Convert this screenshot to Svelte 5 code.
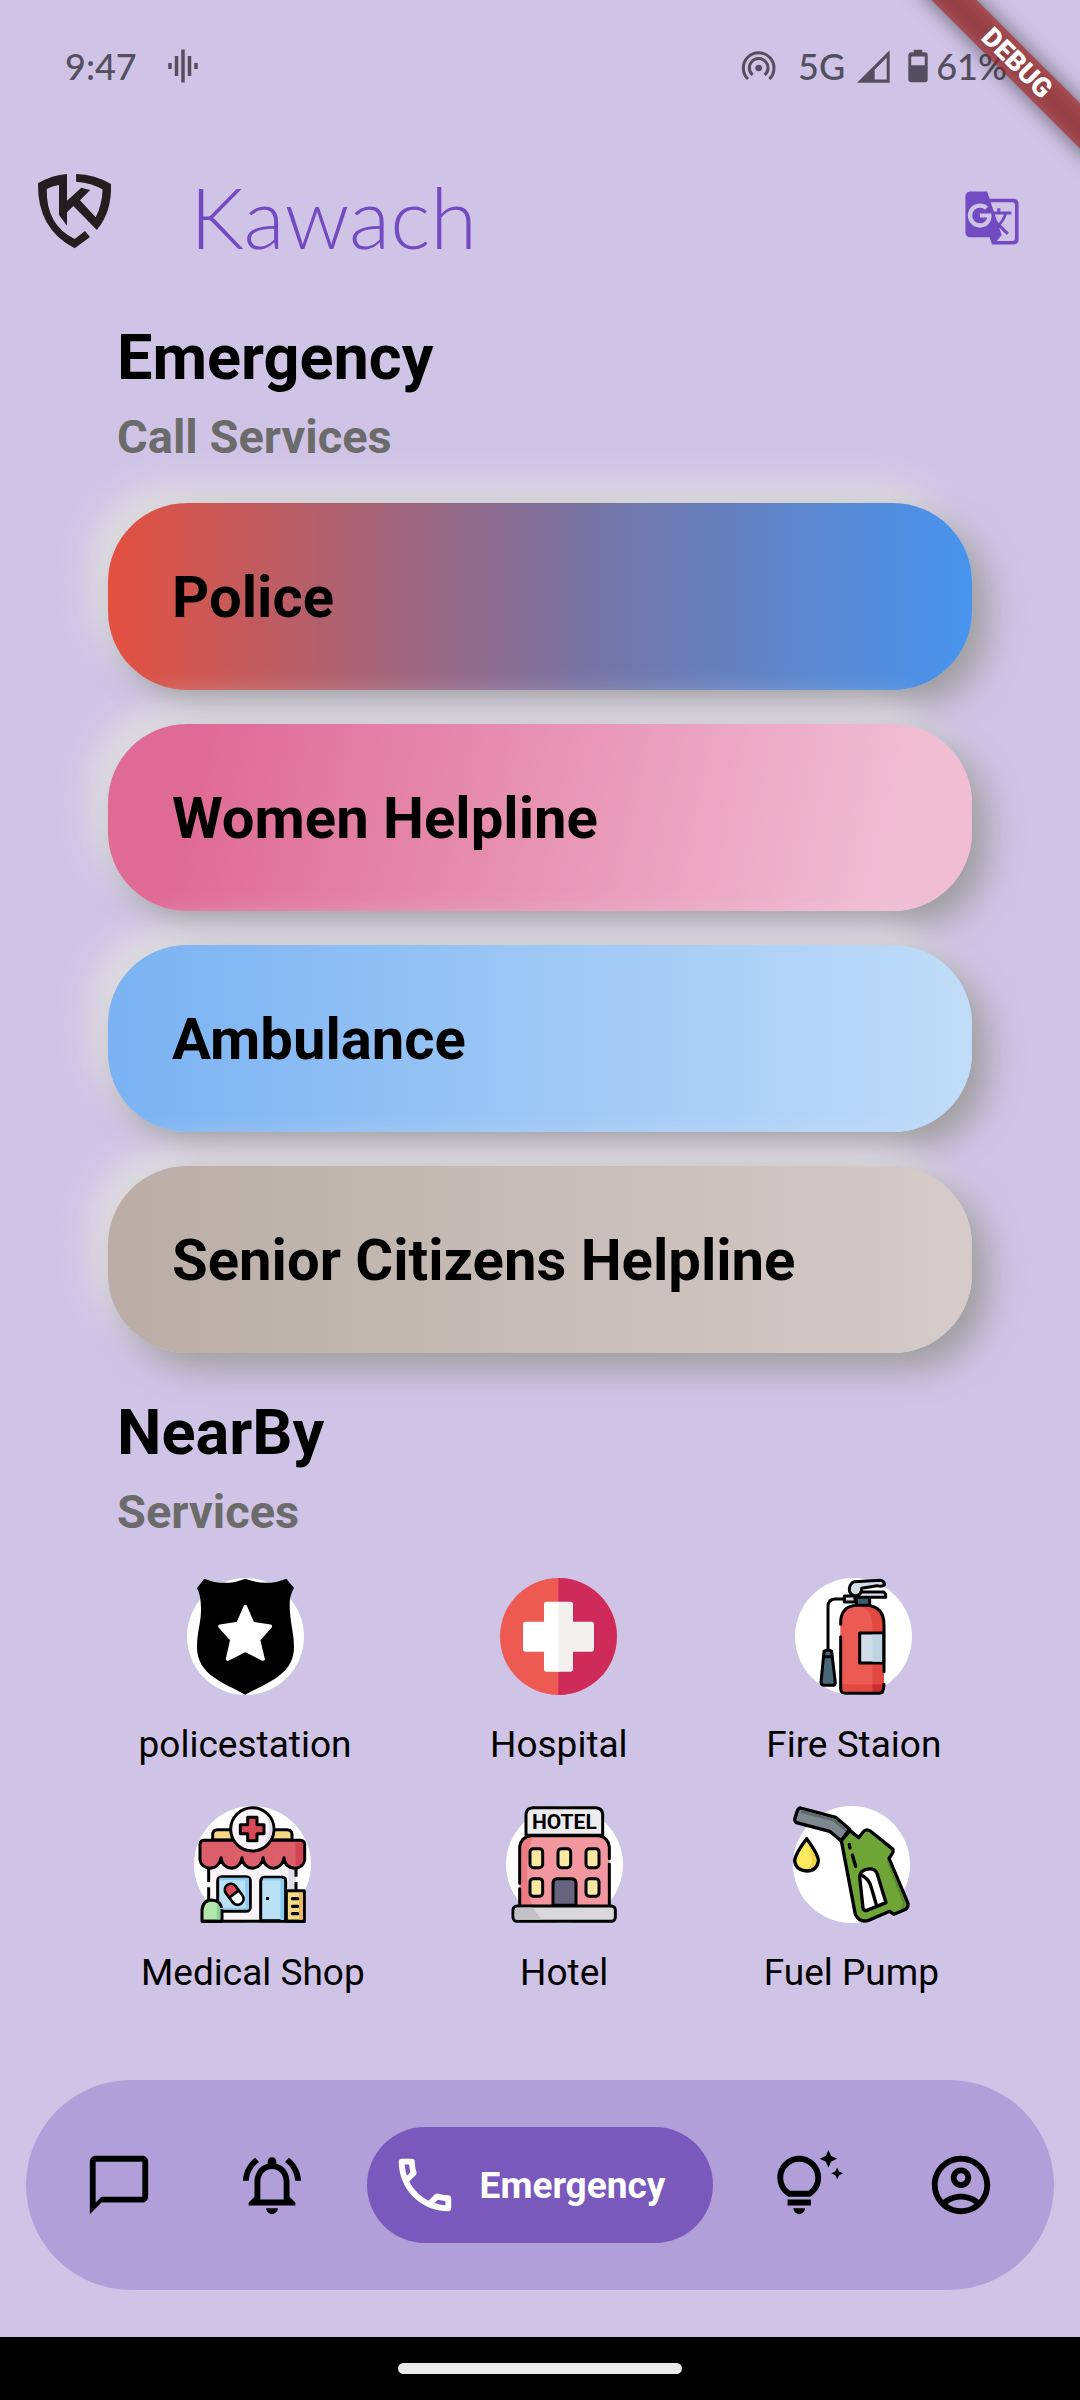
<script>
  const services = [
    { name: 'Police', tone: 'police' },
    { name: 'Women Helpline', tone: 'women' },
    { name: 'Ambulance', tone: 'ambulance' },
    { name: 'Senior Citizens Helpline', tone: 'senior' }
  ];
</script>

{#snippet policeIcon()}
  <svg class="place-icon" viewBox="78 55 351 351" aria-hidden="true">
    <circle cx="253.500" cy="230.500" r="175.500" fill="#fff" />
    <path d="M130 57Q190 82 253 57Q316 82 376 57L399 85C392 98 386 112 386 130C386 190 399 215 399 262C399 345 320 368 253 405C186 368 108 345 108 262C108 215 120 190 120 150C120 115 115 100 108 85Z" fill="#000" />
    <path d="M253 141L275 192L328 200L292 240L306 298L253 271L200 298L213 240L177 200L231 192Z" fill="#fff" stroke="#fff" stroke-width="11" stroke-linejoin="round" />
  </svg>
{/snippet}

{#snippet hospitalIcon()}
  <svg class="place-icon" viewBox="63 55 351 351" aria-hidden="true">
    <circle cx="238.500" cy="230.500" r="175.500" fill="#ed5a52" />
    <path d="M238 55a175.500 175.500 0 0 1 0 351z" fill="#cf2b5a" />
    <path d="M242 126H203q-8 0-8 8V186H140q-8 0-8 8V268q0 8 8 8H195V328q0 8 8 8H242z" fill="#fff" />
    <path d="M238 126H274q8 0 8 8V186H337q8 0 8 8V268q0 8-8 8H282V328q0 8-8 8H238z" fill="#f3f1f0" />
  </svg>
{/snippet}

{#snippet fireIcon()}
  <svg class="place-icon" viewBox="950 55 351 351" aria-hidden="true">
    <circle cx="1125.500" cy="230.500" r="175.500" fill="#fff" />
    <path d="M1086 400V195Q1092 140 1138 137H1166Q1216 142 1217 195V400Z" fill="#eb5a53" />
    <path d="M1150 140Q1182 155 1182 195V400H1216V195Q1212 142 1150 140Z" fill="#e1483f" />
    <path d="M1088 374H1182V402H1088Z" fill="#e1483f" />
    <path d="M1182 374H1216V402H1182Z" fill="#c92f31" />
    <path d="M1134 114H1176V134H1134Z" fill="#3c5b70" />
    <g fill="#d0dce8" stroke="#000" stroke-width="9" stroke-linejoin="round" stroke-linecap="round">
      <path d="M1144 220H1216V310H1144Z" />
      <path d="M1098 109H1130V127H1098Z" />
      <path d="M1134 97H1217L1222 104V113H1134Z" fill="#d9e3ec" />
      <path d="M1128 66L1205 62Q1219 64 1218 76Q1212 82 1196 78L1150 86Q1150 108 1131 108Q1112 106 1113 86Q1116 70 1128 66Z" />
    </g>
    <path d="M1182 225H1212V306H1182Z" fill="#bfd3e2" />
    <g fill="none" stroke="#000" stroke-width="9" stroke-linejoin="round" stroke-linecap="round">
      <path d="M1087 194Q1085 138 1138 137H1166Q1217 142 1217 195V336M1087 231V388Q1088 401 1102 401H1204Q1216 400 1217 374M1134 114V134M1174 114V134" />
      <path d="M1098 118H1070Q1049 120 1049 140V270" />
      <path d="M1037 275Q1049 267 1060 275L1071 370Q1070 377 1062 377H1036Q1028 376 1028 368Z" fill="#4b6678" />
      <path d="M1037 291H1061" />
    </g>
  </svg>
{/snippet}

{#snippet medicalIcon()}
  <svg class="place-icon" viewBox="225 78 351 351" aria-hidden="true">
    <circle cx="400.500" cy="253.500" r="175.500" fill="#fff" />
    <path d="M272 250H530V422H272Z" fill="#f8f4f8" />
    <path d="M508 250H530V330H508Z" fill="#dfdcec" />
    <g stroke="#000" stroke-width="9" stroke-linejoin="round">
      <path d="M281 180V163Q282 149 296 149H504Q518 149 519 163V180Z" fill="#f8d983" />
      <path d="M243 192Q244 181 256 181H544Q556 182 557 192V240Q552 264 526 265Q497 262 495 233Q491 262 463 265Q435 262 432 233Q428 262 400 265Q372 262 369 233Q365 262 338 265Q309 262 306 233Q302 262 274 265Q247 262 243 240Z" fill="#dc5e6a" />
      <rect x="296" y="290" width="98" height="104" rx="12" fill="#b9e2f7" />
      <path d="M425 422V303Q426 293 436 292H490Q500 293 500 303V422Z" fill="#b9e2f7" />
      <path d="M502 332H556V424H502Z" fill="#f8d983" />
      <path d="M249 424V390Q252 360 279 360Q306 362 309 390V424Z" fill="#b4e7ab" />
      <circle cx="400" cy="148" r="65" fill="#f8f4f8" />
      <path d="M386 112H414V134H435V161H414V182H386V161H364V134H386Z" fill="#d84a57" />
      <path d="M246 424H559M269 266V306M269 322V360M531 266V290M531 306V330" fill="none" />
    </g>
    <path d="M529 187H543Q552 189 552 198V240Q546 257 530 260Z" fill="#d34453" />
    <path d="M440 104Q464 148 434 190Q462 175 460 146Q460 120 440 104Z" fill="#dfdcec" />
    <path d="M491 298H495V420H484V298ZM378 295H390V388H300V383H380Z" fill="#8ec9f4" />
    <path d="M540 338H551V419H540Z" fill="#eeb863" />
    <path d="M301 297H388M432 298H488" stroke="#8ec9f4" stroke-width="7" />
    <g transform="rotate(-37 345 342)">
      <rect x="327" y="308" width="36" height="70" rx="18" fill="#fff" />
      <path d="M327 342V326a18 18 0 0 1 36 0V342Z" fill="#dc4958" />
      <path d="M327 342H363" stroke="#000" stroke-width="8" />
      <rect x="327" y="308" width="36" height="70" rx="18" fill="none" stroke="#000" stroke-width="8" />
    </g>
    <path d="M520 356H536M520 379H536M520 401H536" stroke="#000" stroke-width="10" stroke-linecap="round" />
    <rect x="441" y="351" width="9" height="9" />
    <path d="M294 368Q303 375 303 392V418H293Z" fill="#83cf95" />
  </svg>
{/snippet}

{#snippet hotelIcon()}
  <svg class="place-icon" viewBox="80 78 351 351" aria-hidden="true">
    <circle cx="255.500" cy="253.500" r="175.500" fill="#fff" />
    <path d="M121 378V200Q126 170 154 167H360Q386 172 390 200V378Z" fill="#f2979f" />
    <path d="M121 378V200Q126 172 160 170Q140 220 144 300Q146 350 160 378Z" fill="#ec7c82" />
    <g stroke="#000" stroke-width="9" stroke-linejoin="round" stroke-linecap="round">
      <path d="M140 166V102Q142 84 160 83H350Q368 84 370 102V166Z" fill="#ececee" />
      <path d="M121 310V200Q126 170 154 167H360Q386 172 390 200V236M390 252V376M121 326V376" fill="none" />
      <path d="M221 376V308Q222 297 233 296H278Q289 297 290 308V376Z" fill="#68647f" />
      <g fill="#fbe8a2">
        <rect x="152" y="206" width="38" height="57" rx="10" />
        <rect x="236" y="206" width="38" height="57" rx="10" />
        <rect x="320" y="206" width="39" height="57" rx="10" />
        <rect x="152" y="296" width="38" height="53" rx="10" />
        <rect x="320" y="296" width="39" height="53" rx="10" />
      </g>
      <rect x="101" y="378" width="307" height="46" rx="12" fill="#d9d9dc" />
    </g>
    <path d="M114 383H160L187 419H114Q106 418 106 411V391Q107 384 114 383Z" fill="#c3c2c9" />
    <text class="sign" x="255" y="148" text-anchor="middle">HOTEL</text>
  </svg>
{/snippet}

{#snippet fuelIcon()}
  <svg class="place-icon" viewBox="940 78 351 351" aria-hidden="true">
    <circle cx="1115.500" cy="253.500" r="175.500" fill="#fff" />
    <g stroke="#000" stroke-width="10" stroke-linejoin="round" stroke-linecap="round">
      <path d="M963 84L1068 112L1110 148L1084 182L1050 154L950 128Q945 124 945 118L953 92Q957 84 963 84Z" fill="#7f878e" />
      <path d="M1085 182L1111 152L1137 173L1153 153Q1162 146 1172 153L1240 208Q1242 216 1237 222L1228 235L1285 370Q1286 382 1278 388L1243 403L1230 394L1164 422Q1138 427 1127 403Z" fill="#6fa436" />
      <path d="M1140 290Q1142 272 1160 268Q1184 262 1192 280L1219 368L1160 392Q1152 392 1150 384Z" fill="#fff" />
      <path d="M1142 284Q1168 294 1176 326L1190 374M1109 193L1111 204M1118 225L1128 259" fill="none" />
      <path d="M981 176Q1016 224 1016 242Q1012 272 981 273Q948 271 945 242Q946 222 981 176Z" fill="#fce95d" />
    </g>
    <path d="M967 90L1066 117L1102 148L1096 154L1060 124L962 98Z" fill="#5f676d" />
    <path d="M1224 238L1234 262L1278 368Q1278 380 1264 388L1270 370L1222 246Z" fill="#588a2c" />
    <path d="M981 186Q1002 225 996 250Q992 262 980 267Q1008 264 1011 242Q1010 226 981 186Z" fill="#f1d04c" />
  </svg>
{/snippet}

{#snippet place(name, icon)}
  <button type="button" class="place">
    {@render icon()}
    <span>{name}</span>
  </button>
{/snippet}

<div class="screen">
  <div class="status">
    <time>9:47</time>
    <svg class="wave" viewBox="0 0 30 34" aria-hidden="true">
      <path d="M2 14v6M8.500 7v20M15 .500v33M21.500 7v20M28 14v6" stroke="currentColor" stroke-width="3.500" />
    </svg>
    <svg class="hotspot" viewBox="125 153 102 90" aria-hidden="true">
      <g fill="none" stroke="currentColor" stroke-width="9">
        <path d="M143 237A46 46 0 1 1 207 237" />
        <path d="M157 225A28 28 0 1 1 193 225" />
      </g>
      <circle cx="175" cy="204" r="10" fill="currentColor" />
    </svg>
    <span class="network">5G</span>
    <svg class="signal" viewBox="469 148 99 98" aria-hidden="true">
      <path d="M469 246L567 148V246ZM522 236H558V171L522 207Z" fill="currentColor" fill-rule="evenodd" />
    </svg>
    <svg class="battery" viewBox="623 143 62 103" aria-hidden="true">
      <path d="M641 144H667V152H677Q684 153 684 160V238Q683 245 676 245H632Q625 244 624 238V160Q625 153 632 152H641ZM633 165V192H675V165Z" fill="currentColor" fill-rule="evenodd" />
    </svg>
    <span>61%</span>
  </div>

  <div class="ribbon-corner"><div class="ribbon"><span>DEBUG</span></div></div>

  <header>
    <svg class="logo" viewBox="37 170 75 96" role="img" aria-label="Kawach logo">
      <path d="M38 183.300Q52 175 67 174V200.700L81.300 187.700L90.200 190L80 200.300L95.700 217.300Q102 205 102.600 189.500Q92 183 76.100 181.700V174Q95 174.500 111 184Q112 212 96.800 230L73.300 206L67 212.300V225.700L59 215V185Q52 186 46.800 189Q46 225 74.700 239L85 231L90 237L74.700 248.300Q37 229 38 183.300Z" fill="#231f20" />
    </svg>
    <h1>Kawach</h1>
    <button type="button" class="translate" aria-label="Translate">
      <svg viewBox="0 0 24 24" aria-hidden="true">
        <path fill="currentColor" d="M21 4H11l-1-3H3c-1.100 0-2 .9-2 2v15c0 1.100.9 2 2 2h8l1 3h9c1.100 0 2-.9 2-2V6c0-1.100-.9-2-2-2zM7 16c-2.760 0-5-2.240-5-5s2.240-5 5-5c1.350 0 2.480.5 3.350 1.300L9.030 8.570c-.38-.36-1.040-.78-2.030-.78-1.740 0-3.150 1.440-3.150 3.210S5.260 14.210 7 14.210c2.010 0 2.840-1.440 2.920-2.410H7v-1.710h4.680c.07.31.12.61.12 1.020C11.800 13.970 9.890 16 7 16zm6.170-5.420h3.700c-.43 1.250-1.110 2.430-2.050 3.470-.31-.35-.6-.72-.86-1.100l-.79-2.370zm8.330 9.920c0 .55-.45 1-1 1H14l2-2.500-1.040-3.100 3.100 3.100.92-.92-3.300-3.250.02-.02c1.130-1.250 1.930-2.690 2.400-4.220H20v-1.300h-4.530V8h-1.290v1.290h-1.440L11.460 5.500h9.040c.55 0 1 .45 1 1v14z" />
      </svg>
    </button>
  </header>

  <main>
    <section class="emergency">
      <h2>Emergency</h2>
      <p>Call Services</p>
      <div class="cards">
        {#each services as service}
          <button type="button" class="card {service.tone}">{service.name}</button>
        {/each}
      </div>
    </section>

    <section class="nearby">
      <h2>NearBy</h2>
      <p>Services</p>
      <div class="places">
        <div class="row">
          {@render place('policestation', policeIcon)}
          {@render place('Hospital', hospitalIcon)}
          {@render place('Fire Staion', fireIcon)}
        </div>
        <div class="row">
          {@render place('Medical Shop', medicalIcon)}
          {@render place('Hotel', hotelIcon)}
          {@render place('Fuel Pump', fuelIcon)}
        </div>
      </div>
    </section>
  </main>

  <nav aria-label="Main">
    <button type="button" aria-label="Chat">
      <svg viewBox="0 0 24 24" aria-hidden="true"><path fill="currentColor" d="M20 2H4c-1.100 0-2 .9-2 2v18l4-4h14c1.100 0 2-.9 2-2V4c0-1.100-.9-2-2-2zm0 14H6l-2 2V4h16v12z" /></svg>
    </button>
    <button type="button" aria-label="Alerts">
      <svg viewBox="0 0 24 24" aria-hidden="true"><path fill="currentColor" d="M12 22c1.100 0 2-.9 2-2h-4c0 1.100.9 2 2 2zm6-6v-5c0-3.070-1.630-5.640-4.500-6.320V4c0-.83-.67-1.500-1.500-1.500s-1.500.67-1.500 1.500v.68C7.640 5.360 6 7.920 6 11v5l-2 2v1h16v-1l-2-2zm-2 1H8v-6c0-2.480 1.510-4.500 4-4.500s4 2.020 4 4.500v6zM7.580 4.080L6.150 2.650C3.750 4.480 2.170 7.300 2.030 10.500h2c.15-2.650 1.510-4.970 3.550-6.420zM19.970 10.500h2c-.15-3.200-1.730-6.020-4.120-7.850l-1.420 1.430c2.020 1.450 3.390 3.770 3.540 6.420z" /></svg>
    </button>
    <button type="button" class="active" aria-current="page">
      <svg viewBox="0 0 24 24" aria-hidden="true"><path fill="currentColor" d="M6.540 5c.06.89.21 1.760.45 2.590l-1.200 1.200c-.41-1.200-.67-2.470-.76-3.790h1.510m9.860 12.020c.85.24 1.720.39 2.600.45v1.490c-1.320-.09-2.590-.35-3.800-.75l1.200-1.190M7.500 3H4c-.55 0-1 .45-1 1 0 9.390 7.610 17 17 17 .55 0 1-.45 1-1v-3.490c0-.55-.45-1-1-1-1.240 0-2.450-.2-3.570-.57-.1-.04-.21-.05-.31-.05-.26 0-.51.1-.71.29l-2.200 2.200c-2.830-1.450-5.150-3.760-6.590-6.590l2.200-2.200c.28-.28.36-.67.25-1.020C8.700 6.450 8.500 5.250 8.500 4c0-.55-.45-1-1-1z" /></svg>
      <span>Emergency</span>
    </button>
    <button type="button" aria-label="Tips">
      <svg viewBox="0 0 24 24" aria-hidden="true"><path fill="currentColor" d="M7 20h4c0 1.100-.9 2-2 2s-2-.9-2-2zM5 19h8v-2H5v2zM16.500 9.500c0 3.820-2.660 5.860-3.770 6.500H5.270C4.160 15.360 1.500 13.320 1.500 9.500 1.500 5.360 4.860 2 9 2s7.500 3.360 7.500 7.500zM14.500 9.500C14.500 6.470 12.030 4 9 4S3.500 6.470 3.500 9.500c0 2.470 1.490 3.890 2.350 4.500h6.300c.86-.61 2.350-2.030 2.350-4.500zM21.370 7.370L20 8l1.370.63L22 10l.63-1.370L24 8l-1.370-.63L22 6l-.63 1.370zM19 6l.94-2.060L22 3l-2.060-.94L19 0l-.94 2.060L16 3l2.060.94L19 6z" /></svg>
    </button>
    <button type="button" aria-label="Profile">
      <svg viewBox="0 0 24 24" aria-hidden="true"><path fill="currentColor" d="M12 2C6.480 2 2 6.480 2 12s4.480 10 10 10 10-4.480 10-10S17.520 2 12 2zM7.350 18.500C8.660 17.560 10.260 17 12 17s3.340.56 4.650 1.500C15.340 19.440 13.740 20 12 20s-3.340-.56-4.650-1.500zm10.790-1.380C16.450 15.800 14.320 15 12 15s-4.450.8-6.140 2.120C4.700 15.730 4 13.950 4 12c0-4.420 3.580-8 8-8s8 3.580 8 8c0 1.950-.7 3.730-1.860 5.120zM12 6c-1.930 0-3.500 1.570-3.500 3.500S10.070 13 12 13s3.500-1.570 3.500-3.500S13.930 6 12 6zm0 5c-.83 0-1.500-.67-1.500-1.500S11.170 8 12 8s1.500.67 1.500 1.500S12.830 11 12 11z" /></svg>
    </button>
  </nav>

  <div class="system"><div class="handle"></div></div>
</div>

<style>
  :global(body) {
    margin: 0;
    background: #cfc4e6;
  }

  .screen {
    position: relative;
    display: flex;
    flex-direction: column;
    min-height: 100vh;
    font-family: Roboto, sans-serif;
    color: #000;
  }

  button {
    margin: 0;
    padding: 0;
    border: 0;
    background: none;
    color: inherit;
    font: inherit;
    cursor: pointer;
  }

  svg {
    display: block;
    flex: none;
    overflow: visible;
  }

  h1, h2, p {
    margin: 0;
  }

  .status {
    display: flex;
    align-items: center;
    height: 132px;
    padding: 0 73px 0 65px;
    font-family: Lato, sans-serif;
    font-size: 36px;
    font-weight: 500;
    line-height: 44px;
    color: #544f5e;
  }

  .wave {
    width: 30px;
    height: 34px;
    margin-left: 31px;
  }

  .hotspot {
    width: 34px;
    height: 30px;
    margin-left: auto;
  }

  .network {
    margin-left: 22px;
  }

  .signal {
    width: 33px;
    height: 33px;
    margin-left: 12px;
  }

  .battery {
    width: 20px;
    height: 34px;
    margin: 0 8px 0 18px;
  }

  .ribbon-corner {
    position: absolute;
    top: 0;
    right: 0;
    width: 180px;
    height: 180px;
    overflow: hidden;
    pointer-events: none;
  }

  .ribbon {
    position: absolute;
    top: 47px;
    right: -62px;
    width: 250px;
    height: 32px;
    transform: rotate(45deg);
    text-align: center;
    font-size: 27px;
    font-weight: 900;
    line-height: 32px;
    color: #fff;
  }

  .ribbon::before,
  .ribbon::after {
    content: '';
    position: absolute;
    inset: 0;
  }

  .ribbon::before {
    background: rgba(0, 0, 0, 0.5);
    filter: blur(11px);
  }

  .ribbon::after {
    background: rgba(170, 36, 34, 0.63);
  }

  .ribbon span {
    position: relative;
    z-index: 1;
  }

  header {
    display: flex;
    align-items: center;
    margin-top: 34px;
    padding: 0 59px 0 37px;
  }

  .logo {
    width: 75px;
    height: 96px;
  }

  h1 {
    flex: 1;
    margin-left: 78px;
    padding-bottom: 4px;
    font-family: Lato, sans-serif;
    font-size: 85px;
    font-weight: 300;
    line-height: 100px;
    color: #724bc2;
  }

  .translate {
    color: #724bc2;
  }

  .translate svg {
    width: 58px;
    height: 58px;
  }

  main {
    flex: 1;
    padding: 51px 108px 76px;
  }

  h2 {
    padding-left: 9px;
    font-size: 63px;
    font-weight: 700;
    line-height: 74px;
  }

  section p {
    margin-top: 14px;
    padding-left: 9px;
    font-size: 47px;
    font-weight: 700;
    line-height: 56px;
    color: #6b6b6b;
  }

  .cards {
    display: grid;
    gap: 34px;
    margin-top: 38px;
  }

  .card {
    min-height: 187px;
    padding: 0 64px;
    border-radius: 79px;
    text-align: left;
    font-size: 58px;
    font-weight: 700;
    box-shadow:
      16px 16px 34px #9e9e9e,
      -16px -16px 34px #e0e0e0;
  }

  .police {
    background: linear-gradient(90deg, #e35040, #7874a3 55%, #4794ee);
  }

  .women {
    background: linear-gradient(102deg, #df6a94 10%, #f0bdd1 90%);
  }

  .ambulance {
    background: linear-gradient(90deg, #7ab2f2, #c0dcf8);
  }

  .senior {
    background: linear-gradient(90deg, #baada7, #d5cbc8);
  }

  .nearby {
    margin-top: 43px;
  }

  .nearby h2,
  .nearby p {
    position: relative;
  }

  .places {
    display: grid;
    gap: 39px;
    margin: 38px -108px 0;
  }

  .row {
    display: flex;
    justify-content: space-evenly;
  }

  .place {
    display: flex;
    flex-direction: column;
    align-items: center;
    gap: 28px;
    font-size: 37px;
    line-height: 44px;
  }

  .place-icon {
    width: 117px;
    height: 117px;
  }

  .sign {
    font-family: Roboto, sans-serif;
    font-size: 63px;
    font-weight: 700;
  }

  nav {
    display: flex;
    align-items: center;
    justify-content: space-between;
    height: 210px;
    margin: 0 26px 47px;
    padding: 0 35px;
    box-sizing: border-box;
    border-radius: 105px;
    background: #b09fd9;
  }

  nav button {
    display: flex;
    align-items: center;
    padding: 23px;
  }

  nav svg {
    width: 70px;
    height: 70px;
  }

  nav .active {
    gap: 20px;
    padding: 23px 48px 23px 23px;
    border-radius: 58px;
    background: #7959bb;
    color: #fff;
    font-size: 37px;
    font-weight: 700;
  }

  .system {
    display: flex;
    align-items: center;
    justify-content: center;
    height: 63px;
    background: #000;
  }

  .handle {
    width: 284px;
    height: 11px;
    border-radius: 6px;
    background: #ebebeb;
  }
</style>
